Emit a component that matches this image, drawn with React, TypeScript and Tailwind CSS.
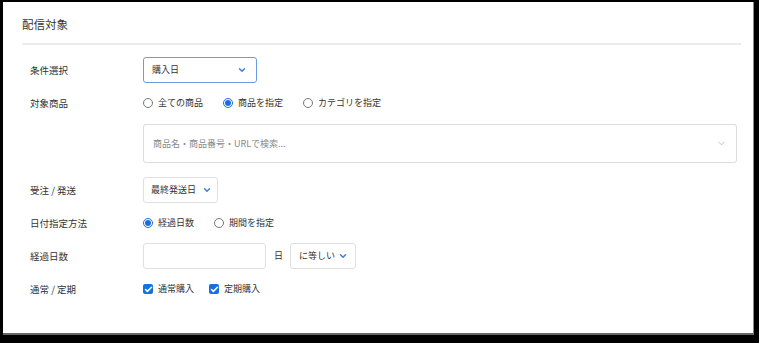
import { ChevronDown, Check } from "lucide-react";

const FONT = "font-['Noto_Sans_CJK_JP','Noto_Sans',sans-serif]";

function Radio({ checked, label }: { checked?: boolean; label: string }) {
  return (
    <label className="flex items-center gap-[5px]">
      {checked ? (
        <span className="flex h-[10px] w-[10px] items-center justify-center rounded-full border border-[#1a6fe0] bg-white">
          <span className="h-[6px] w-[6px] rounded-full bg-[#1a6fe0]" />
        </span>
      ) : (
        <span className="h-[10px] w-[10px] rounded-full border border-[#777] bg-white" />
      )}
      <span>{label}</span>
    </label>
  );
}

function Checkbox({ label }: { label: string }) {
  return (
    <label className="flex items-center gap-[5px]">
      <span className="flex h-[10px] w-[10px] items-center justify-center rounded-[2px] bg-[#1a6fe0]">
        <Check size={9} strokeWidth={4} color="#ffffff" />
      </span>
      <span>{label}</span>
    </label>
  );
}

function Row({ label, children, className = "" }: { label: string; children: React.ReactNode; className?: string }) {
  return (
    <div className={`flex items-center ${className}`}>
      <div className="w-[113px] shrink-0 text-[9.5px] text-[#333]">{label}</div>
      <div className="flex flex-1 items-center">{children}</div>
    </div>
  );
}

export default function App() {
  return (
    <div className={`h-[343px] w-[759px] bg-black pb-[8px] pl-[3px] pr-[5px] pt-[2px] ${FONT}`}>
      <div className="flex h-full flex-col border-b-2 border-r border-b-[#666] border-r-[#888] bg-white">
        <div className="pl-[19px] pr-[12px] pt-[14px]">
          <h2 className="text-[11.5px] leading-[16px] text-[#333]">配信対象</h2>
          <div className="mt-[11px] h-[2px] bg-[#ebebeb]" />
        </div>

        <div className="flex flex-col gap-[13px] pl-[27px] pr-[16px] pt-[12px] text-[9px] text-[#333]">
          <Row label="条件選択" className="h-[26px]">
            <div className="flex h-[26px] w-[114px] items-center justify-between rounded-[3px] border border-[#6b9be0] pl-[8px] pr-[9px]">
              <span>購入日</span>
              <ChevronDown size={10} strokeWidth={3.5} color="#3f7fd9" />
            </div>
          </Row>

          <Row label="対象商品" className="h-[14px]">
            <div className="flex items-center gap-[20px]">
              <Radio label="全ての商品" />
              <Radio checked label="商品を指定" />
              <Radio label="カテゴリを指定" />
            </div>
          </Row>

          <div className="ml-[113px] mt-px flex h-[39px] items-center justify-between rounded-[3px] border border-[#dcdcdc] pl-[9px] pr-[9px] text-[#888]">
            <span>商品名・商品番号・URLで検索...</span>
            <ChevronDown size={11} strokeWidth={1.5} color="#aaaaaa" />
          </div>

          <Row label="受注 / 発送" className="mt-px h-[26px]">
            <div className="flex h-[26px] w-[75px] items-center gap-[6px] rounded-[3px] border border-[#e0e0e0] pl-[7px]">
              <span>最終発送日</span>
              <ChevronDown size={10} strokeWidth={3.5} color="#3f7fd9" />
            </div>
          </Row>

          <Row label="日付指定方法" className="h-[14px]">
            <div className="flex items-center gap-[20px]">
              <Radio checked label="経過日数" />
              <Radio label="期間を指定" />
            </div>
          </Row>

          <Row label="経過日数" className="h-[26px]">
            <div className="h-[26px] w-[123px] rounded-[3px] border border-[#e0e0e0]" />
            <span className="ml-[8px] mr-[7px]">日</span>
            <div className="flex h-[26px] w-[66px] items-center justify-between rounded-[3px] border border-[#e0e0e0] pl-[8px] pr-[7px]">
              <span>に等しい</span>
              <ChevronDown size={10} strokeWidth={3.5} color="#3f7fd9" />
            </div>
          </Row>

          <Row label="通常 / 定期" className="h-[14px]">
            <div className="flex items-center gap-[15px]">
              <Checkbox label="通常購入" />
              <Checkbox label="定期購入" />
            </div>
          </Row>
        </div>
      </div>
    </div>
  );
}
